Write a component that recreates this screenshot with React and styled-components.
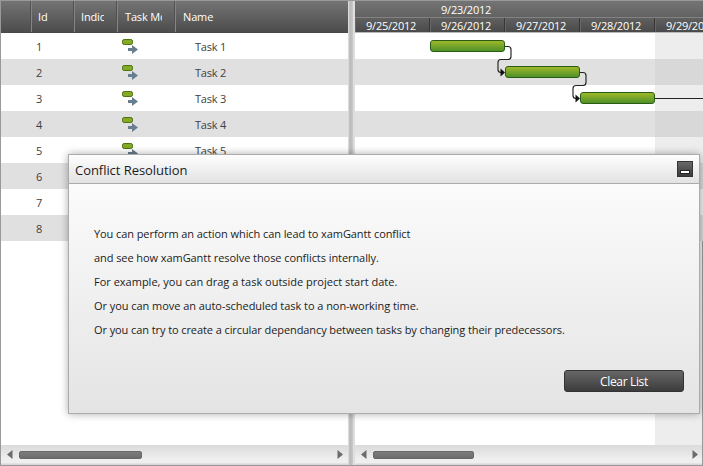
import React from "react";
import styled, { createGlobalStyle } from "styled-components";

const GlobalStyle = createGlobalStyle`
  *, *::before, *::after { box-sizing: border-box; }
  body { margin: 0; overflow: hidden; }
`;

const Frame = styled.div`
  position: relative;
  width: 703px;
  height: 466px;
  padding: 1px 0 0 1px;
  display: grid;
  grid-template-columns: 347px 7px 348px;
  background: #999;
  overflow: hidden;
  font-family: "Open Sans", "Noto Sans", sans-serif;
  font-size: 11px;
  color: #404040;
`;

const Pane = styled.section`
  display: flex;
  flex-direction: column;
  height: 464px;
  min-width: 0;
  overflow: hidden;
  background: #fff;
`;

const ChartPane = styled(Pane)`
  position: relative;
  width: 348px;
`;

const Splitter = styled.div`
  height: 464px;
  background: linear-gradient(90deg, #dadada 0 1px, #c2c2c2 1px, #bbb 3px, #cbcbcb 5px, #dedede 5px);
`;

const GridHeader = styled.div`
  display: grid;
  grid-template-columns: 31px 43px 43px 58px 1fr;
  grid-template-rows: 31px;
  flex: none;
  height: 32px;
  background: linear-gradient(#747474, #4c4c4c);
  border-bottom: 1px solid #484848;
  color: #fff;
`;

const HeaderCell = styled.div`
  overflow: hidden;
  padding: 0 13px 0 ${(p) => p.$inset || 7}px;
  border-right: ${(p) => (p.$last ? "0" : "1px solid #858585")};
  box-shadow: ${(p) => (p.$last ? "none" : "inset -1px 0 #505050")};
`;

const HeaderText = styled.div`
  overflow: hidden;
  white-space: nowrap;
  line-height: 32px;
  letter-spacing: -0.15px;
`;

const Row = styled.div`
  display: grid;
  grid-template-columns: 35px 86px 73px 1fr;
  grid-template-rows: 26px;
  flex: none;
  height: 26px;
  line-height: 27px;
  background: ${(p) => (p.$odd ? "#e0e0e0" : "#fff")};
`;

const Label = styled.span`
  grid-column: ${(p) => p.$col};
  letter-spacing: -0.2px;
`;

const ModeIcon = styled.svg`
  grid-column: 3;
  display: block;
  width: 17px;
  height: 16px;
  margin-top: 5px;
`;

const Scrollbar = styled.div`
  margin-top: auto;
  flex: 0 0 20px;
  display: flex;
  align-items: center;
  padding: 0 5px 1px 6px;
  background: linear-gradient(#dbdbdb, #e1e1e1 5px, #efefef 14px, #efefef 18px, #d6d6d6 19px);
`;

const Arrow = styled.svg`
  display: block;
  width: 6px;
  height: 9px;
  transform: ${(p) => (p.$right ? "scaleX(-1)" : "none")};
`;

const Thumb = styled.div`
  width: ${(p) => p.$w}px;
  height: 8px;
  margin-left: 6px;
  margin-right: auto;
  border: 1px solid #686868;
  border-radius: 2px;
  background: linear-gradient(#7c7c7c, #6c6c6c);
`;

const WeekRow = styled.div`
  flex: none;
  height: 17px;
  padding-left: 86px;
  background: linear-gradient(#747474, #626262);
  border-bottom: 1px solid #838383;
  color: #fff;
  line-height: 18px;
  letter-spacing: -0.22px;
`;

const DayRow = styled.div`
  display: grid;
  grid-template-columns: repeat(5, 75px);
  grid-template-rows: 14px;
  flex: none;
  height: 15px;
  background: linear-gradient(#606060, #4a4a4a);
  border-bottom: 1px solid #b9b9b9;
  color: #fff;
`;

const Day = styled.div`
  padding-left: 11px;
  line-height: 15px;
  white-space: nowrap;
  letter-spacing: -0.22px;
  border-right: 1px solid #363636;
  box-shadow: inset 1px 0 #686868;
`;

const ChartRow = styled.div`
  display: grid;
  grid-template-columns: repeat(5, 75px);
  flex: 0 0 26px;
  align-items: start;
  background: ${(p) => (p.$odd ? "#e0e0e0" : "#fff")};
`;

const Bar = styled.div`
  grid-column: ${(p) => p.$day};
  height: 12px;
  margin-top: 7px;
  border: 1px solid #285c12;
  border-radius: 3px;
  background: linear-gradient(#9fb82c, #4f9128);
`;

const Weekend = styled.div`
  position: absolute;
  left: 300px;
  top: 32px;
  width: 48px;
  height: 412px;
  background: rgba(199, 199, 199, 0.32);
  pointer-events: none;
`;

const EdgeLine = styled.div`
  position: absolute;
  right: 0;
  top: 240px;
  bottom: 0;
  width: 1px;
  background: #999;
`;

const Links = styled.svg`
  position: absolute;
  left: 0;
  top: 0;
  width: 348px;
  height: 240px;
`;

const Dialog = styled.section`
  position: absolute;
  left: 68px;
  top: 154px;
  width: 632px;
  height: 260px;
  display: flex;
  flex-direction: column;
  border: 1px solid #ababab;
  background: linear-gradient(#fefefe, #e4e4e4);
  box-shadow: 0 0 8px rgba(0, 0, 0, 0.32);
  color: #1c1c1c;
`;

const TitleBar = styled.header`
  flex: 0 0 29px;
  display: flex;
  align-items: center;
  justify-content: space-between;
  padding: 2px 6px 0;
  background: linear-gradient(#fefefe, #e2e2e2);
  border-bottom: 1px solid #ababab;
  font-size: 13px;
  letter-spacing: -0.05px;
`;

const Minimize = styled.button`
  display: flex;
  align-items: flex-end;
  justify-content: center;
  width: 16px;
  height: 16px;
  margin-bottom: 3px;
  padding: 0 0 2px;
  border: 1px solid #333;
  background: linear-gradient(#696969, #3c3c3c);
  &::after {
    content: "";
    width: 10px;
    height: 4px;
    border: 1px solid #252525;
    background: #fff;
  }
`;

const Message = styled.div`
  padding: 38px 0 0 25px;
`;

const Line = styled.p`
  margin: 0;
  height: 24px;
  line-height: 24px;
  white-space: nowrap;
  letter-spacing: ${(p) => p.$spacing};
`;

const ClearButton = styled.button`
  align-self: flex-end;
  width: 120px;
  height: 22px;
  margin: auto 15px 21px auto;
  padding: 0;
  border: 1px solid #333;
  border-radius: 3px;
  background: linear-gradient(#666, #3c3c3c);
  color: #fff;
  font: 12px/19px "Open Sans", sans-serif;
  letter-spacing: -0.35px;
`;

const messages = [
  ["You can perform an action which can lead to xamGantt conflict", "-0.08px"],
  ["and see how xamGantt resolve those conflicts internally.", "-0.07px"],
  ["For example, you can drag a task outside project start date.", "0px"],
  ["Or you can move an auto-scheduled task to a non-working time.", "-0.05px"],
  ["Or you can try to create a circular dependancy between tasks by changing their predecessors.", "-0.085px"],
];

const rows = [1, 2, 3, 4, 5, 6, 7, 8];
const days = ["9/25/2012", "9/26/2012", "9/27/2012", "9/28/2012", "9/29/2012"];

function TaskIcon() {
  return (
    <ModeIcon viewBox="0 0 17 16">
      <rect x="0.5" y="1.5" width="10" height="5" rx="1.7" fill="#83aa2b" stroke="#4c7409" />
      <path d="M6 10h4V7l6 4.5-6 4.5v-3H6z" fill="#687d8e" />
    </ModeIcon>
  );
}

function ArrowIcon({ right }) {
  return (
    <Arrow viewBox="0 0 6 9" $right={right}>
      <path d="M5.5 0v9L0 4.5z" fill="#6b6b6b" />
    </Arrow>
  );
}

function HScroll({ width }) {
  return (
    <Scrollbar>
      <ArrowIcon />
      <Thumb $w={width} />
      <ArrowIcon right />
    </Scrollbar>
  );
}

export default function App() {
  return (
    <Frame>
      <GlobalStyle />
      <Pane>
        <GridHeader>
          <HeaderCell />
          <HeaderCell $inset={6}><HeaderText>Id</HeaderText></HeaderCell>
          <HeaderCell $inset={6}><HeaderText>Indicators</HeaderText></HeaderCell>
          <HeaderCell><HeaderText>Task Mode</HeaderText></HeaderCell>
          <HeaderCell $last><HeaderText>Name</HeaderText></HeaderCell>
        </GridHeader>
        {rows.map((n) => (
          <Row key={n} $odd={n % 2 === 0}>
            <Label $col={2}>{n}</Label>
            <TaskIcon />
            <Label $col={4}>Task {n}</Label>
          </Row>
        ))}
        <HScroll width={123} />
      </Pane>
      <Splitter />
      <ChartPane>
        <WeekRow>9/23/2012</WeekRow>
        <DayRow>{days.map((d) => <Day key={d}>{d}</Day>)}</DayRow>
        {rows.map((n) => (
          <ChartRow key={n} $odd={n % 2 === 0}>
            {n <= 3 && <Bar $day={n + 1} />}
          </ChartRow>
        ))}
        <HScroll width={101} />
        <Weekend />
        <EdgeLine />
        <Links viewBox="0 0 348 240" fill="none" stroke="#222" strokeWidth="1.15">
          {[0, 1].map((i) => (
            <g key={i} transform={`translate(${i * 75} ${i * 26})`}>
              <path d="M150 45.5h3q3 0 3 3v7q0 3-3 3h-7q-3 0-3 3v7q0 3 3 3h2" />
              <path d="M145.5 67.5v8l4.5-4z" fill="#111" stroke="none" />
            </g>
          ))}
          <path d="M300 97.5h48" />
        </Links>
      </ChartPane>
      <Dialog>
        <TitleBar>
          <span>Conflict Resolution</span>
          <Minimize aria-label="Minimize" />
        </TitleBar>
        <Message>
          {messages.map(([text, spacing]) => (
            <Line key={text} $spacing={spacing}>{text}</Line>
          ))}
        </Message>
        <ClearButton>Clear List</ClearButton>
      </Dialog>
    </Frame>
  );
}
